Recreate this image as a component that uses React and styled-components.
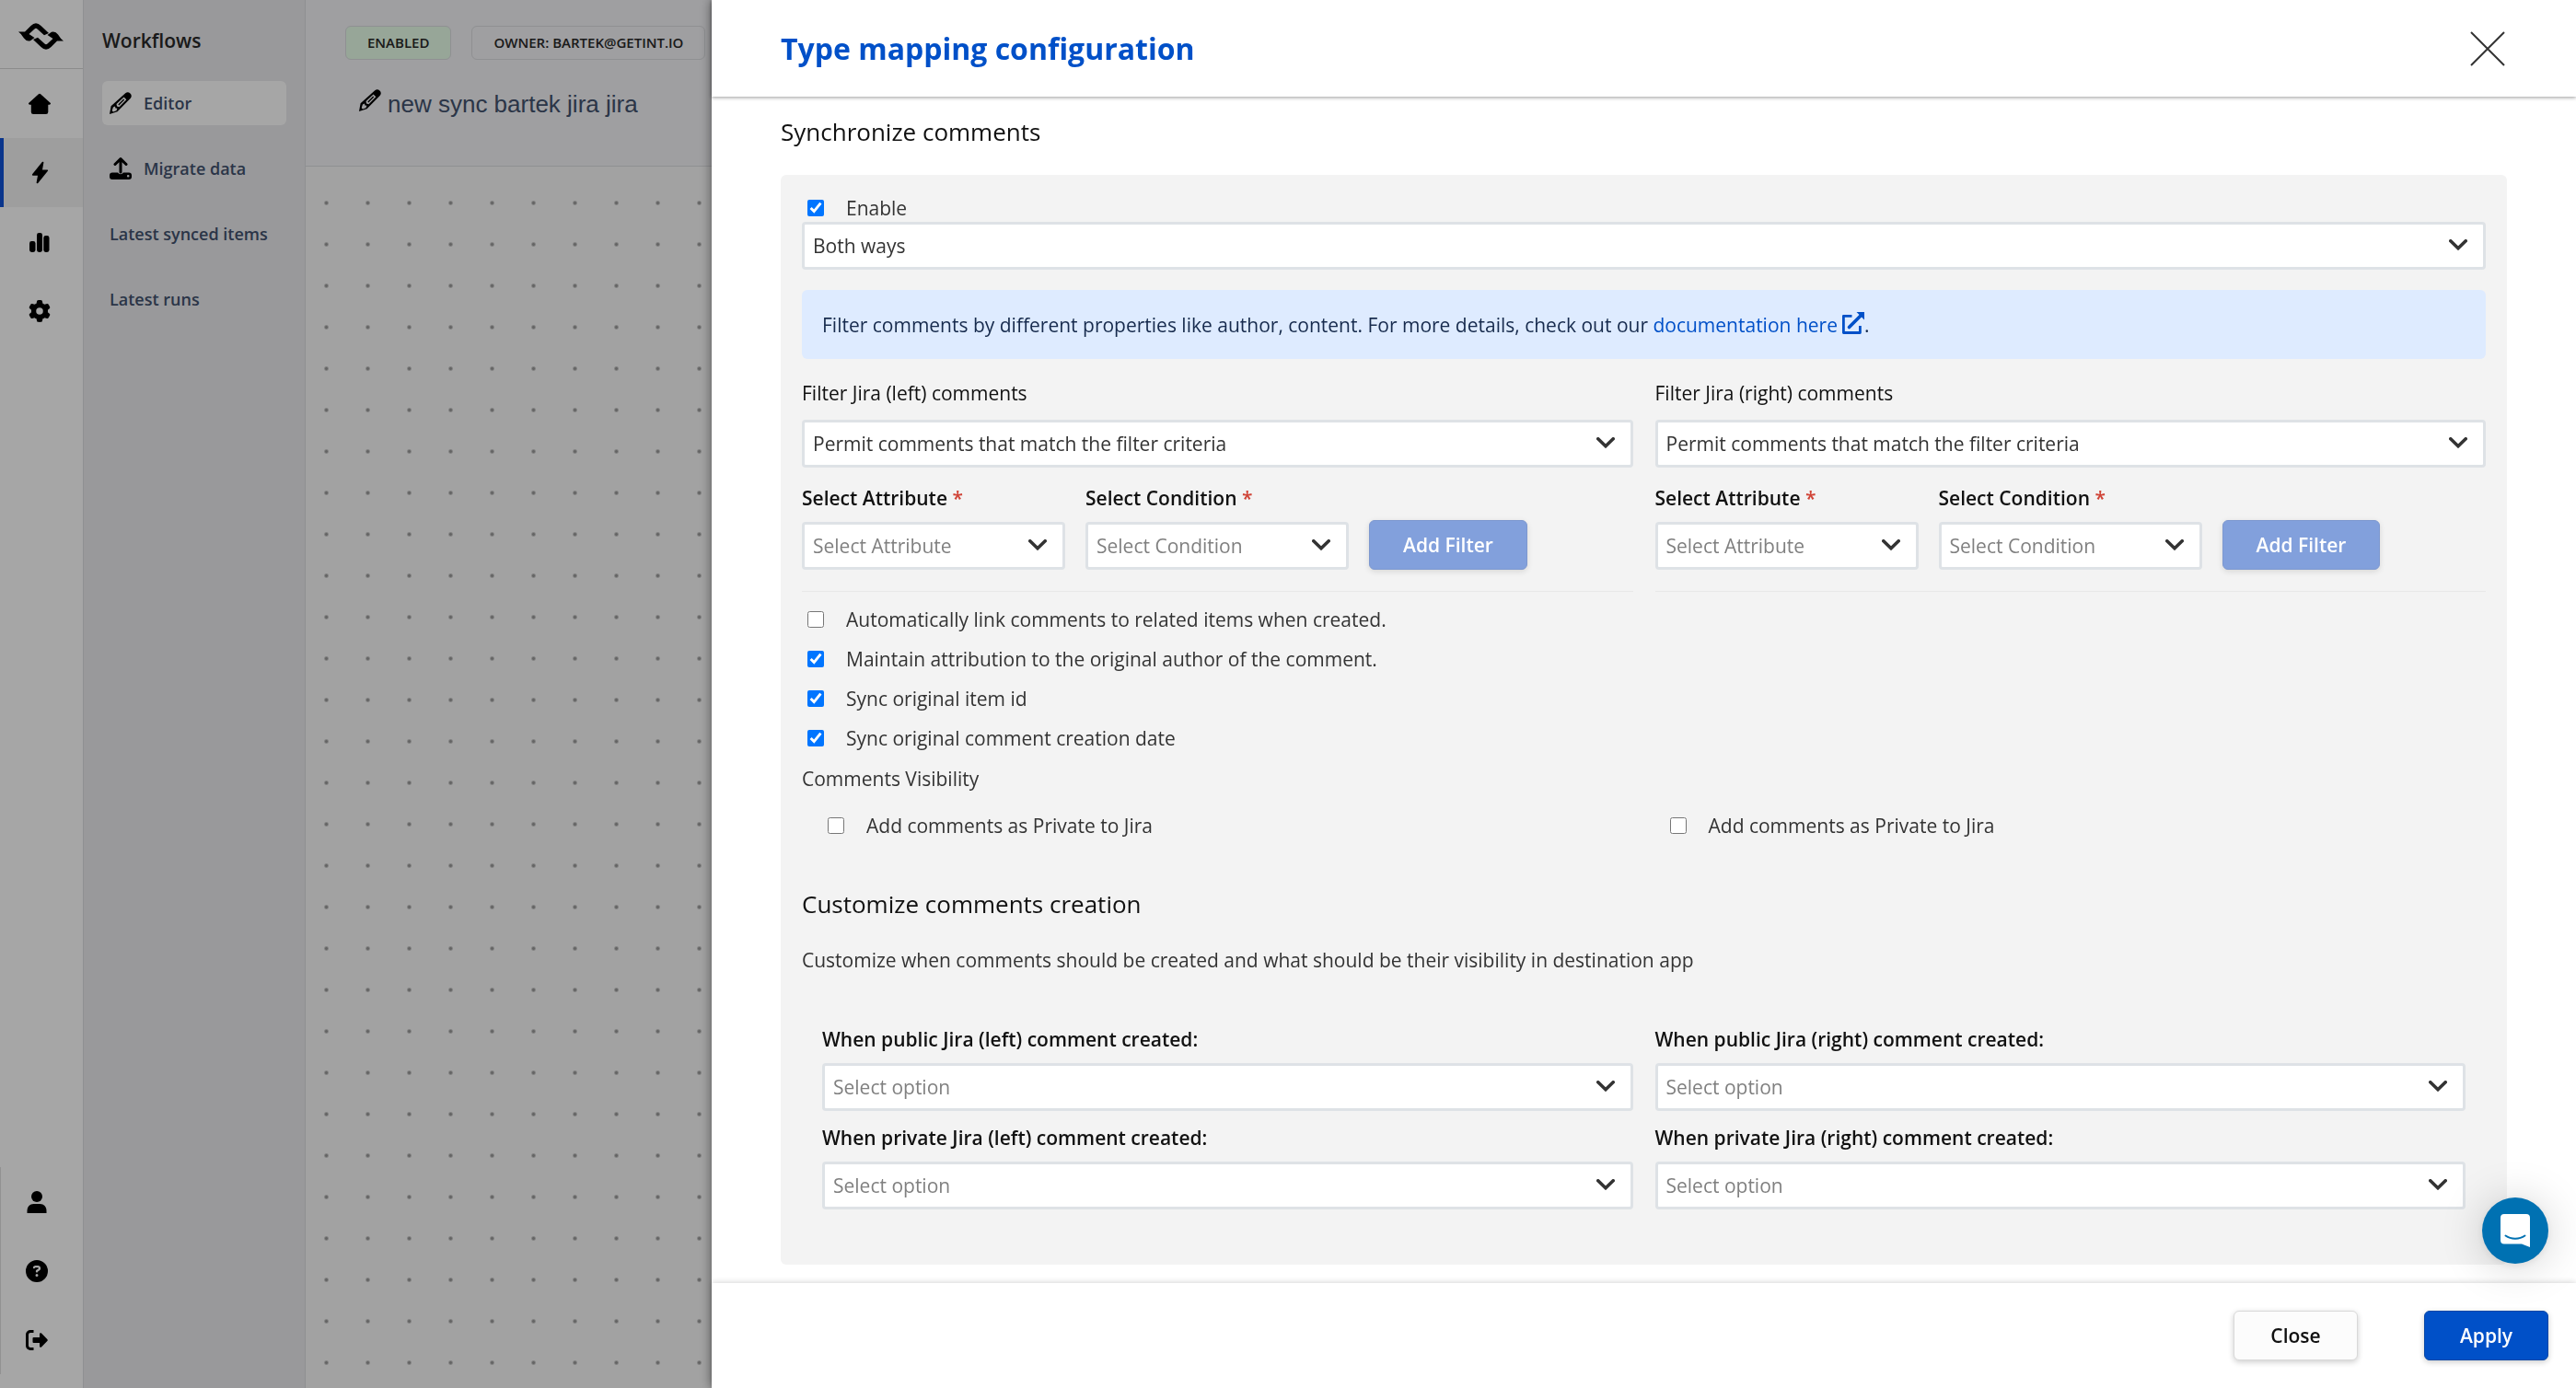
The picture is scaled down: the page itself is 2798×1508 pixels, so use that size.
import React, { useId } from "react";
import styled, { createGlobalStyle, css } from "styled-components";
import { FaGear, FaCircleQuestion } from "react-icons/fa6";
import { IoFlash } from "react-icons/io5";

const GlobalStyle = createGlobalStyle`
  *, *::before, *::after { box-sizing: border-box; }
  body {
    margin: 0;
    font-family: "Open Sans", "Noto Sans", sans-serif;
    font-size: 21px;
    line-height: 30px;
    color: #333;
    overflow: hidden;
  }
  h1, h2, h3, p { margin: 0; }
  a { text-decoration: none; }
  button, select, input { font: inherit; }
`;

const Page = styled.div`
  display: flex;
  height: 100vh;
  background: #fff;
`;

/* ---------- icon rail ---------- */

const Rail = styled.nav`
  display: flex;
  flex-direction: column;
  flex: none;
  width: 91px;
  padding-bottom: 15px;
  border-right: 1px solid #dcdde0;
`;

const LogoLink = styled.a`
  display: flex;
  align-items: center;
  height: 75px;
  padding: 4px 0 0 20px;
  border-bottom: 1px solid #d8d8d8;
`;

const RailLink = styled.a`
  display: flex;
  align-items: center;
  height: 75px;
  padding-left: 27px;
  color: #000;
  border-left: 4px solid transparent;
  ${(p) =>
    p.$active &&
    css`
      background: #f3f3f3;
      border-left-color: #1052d8;
    `}
`;

const RailFooter = styled.div`
  margin-top: auto;
  border-left: 1px solid #e0e0e0;
  ${RailLink} {
    border-left: 0;
  }
`;

/* ---------- section menu ---------- */

const Menu = styled.nav`
  display: flex;
  flex-direction: column;
  gap: 23px;
  flex: none;
  width: 241px;
  padding: 29px 20px;
  background: #ebebee;
  border-right: 1px solid #dcdde0;
`;

const MenuTitle = styled.h2`
  font-size: 21px;
  font-weight: 600;
  line-height: 30px;
  margin-bottom: 6px;
  color: #282828;
`;

const MenuLink = styled.a`
  display: flex;
  align-items: center;
  gap: 13px;
  height: 48px;
  padding: 0 8px;
  border-radius: 6px;
  font-size: 18px;
  font-weight: 600;
  white-space: nowrap;
  color: #42526e;
  background: ${(p) => (p.$active ? "#fff" : "transparent")};
  svg {
    color: #000;
  }
`;

/* ---------- workflow canvas ---------- */

const Workspace = styled.main`
  display: flex;
  flex-direction: column;
  flex: 1;
  min-width: 0;
`;

const WorkspaceHeader = styled.header`
  display: flex;
  flex-direction: column;
  gap: 25px;
  height: 181px;
  padding: 28px 43px;
  background: #f4f4f7;
  border-bottom: 1px solid #dcdde0;
`;

const Badges = styled.div`
  display: flex;
  gap: 22px;
`;

const Badge = styled.span`
  padding: 0 23px;
  border: 1px solid #dcdde0;
  border-radius: 6px;
  font-size: 15px;
  font-weight: 600;
  line-height: 35px;
  color: #282828;
  background: ${(p) => (p.$tone === "success" ? "#e8ffea" : "transparent")};
`;

const WorkflowName = styled.h1`
  display: flex;
  align-items: center;
  gap: 7px;
  padding-left: 15px;
  font-family: "Liberation Sans", Arial, sans-serif;
  font-size: 26px;
  font-weight: 400;
  line-height: 46px;
  color: #42526e;
  svg {
    margin-bottom: 8px;
    color: #000;
  }
`;

const Canvas = styled.div`
  flex: 1;
  background-color: #f9f9f9;
  background-image: radial-gradient(circle, #9c9c9c 1px, transparent 3px);
  background-size: 45px 45px;
  background-position: 0 17px;
`;

const Backdrop = styled.div`
  position: fixed;
  inset: 0;
  background: rgba(0, 0, 0, 0.35);
`;

/* ---------- drawer ---------- */

const Drawer = styled.aside`
  position: fixed;
  top: 0;
  right: 0;
  bottom: 0;
  left: 773px;
  display: flex;
  flex-direction: column;
  background: #fff;
  box-shadow: 0 0 12px rgba(0, 0, 0, 0.5);
`;

const DrawerHeader = styled.header`
  z-index: 1;
  display: flex;
  align-items: center;
  justify-content: space-between;
  flex: none;
  height: 105px;
  padding: 0 77px 0 75px;
  background: #fff;
  box-shadow: 0 1px 4px rgba(0, 0, 0, 0.4);
`;

const DrawerTitle = styled.h1`
  font-size: 32px;
  font-weight: 700;
  line-height: 44px;
  color: #0050c8;
`;

const IconButton = styled.button`
  display: flex;
  padding: 0;
  border: 0;
  background: none;
  color: #333;
  cursor: pointer;
`;

const DrawerBody = styled.div`
  flex: 1;
  min-height: 0;
  overflow-y: auto;
  padding: 20px 75px;
`;

const SectionTitle = styled.h2`
  font-size: 26px;
  font-weight: 400;
  line-height: 36px;
  color: #111;
`;

const Panel = styled.section`
  margin-top: 29px;
  padding: 21px 23px 60px;
  border-radius: 6px;
  background: #f3f3f3;
`;

const CheckLabel = styled.label`
  display: flex;
  align-items: center;
  gap: 24px;
  height: ${(p) => (p.$compact ? "30px" : "43px")};
  padding-left: 6px;
  cursor: pointer;
`;

const CheckInput = styled.input`
  flex: none;
  width: 18px;
  height: 18px;
  margin: 0;
`;

const CheckList = styled.div`
  margin: 8px 0;
`;

const SelectBox = styled.div`
  display: grid;
  align-items: center;
  > * {
    grid-area: 1 / 1;
  }
  > svg {
    justify-self: end;
    margin-right: 20px;
    margin-bottom: 3px;
    color: #333;
    pointer-events: none;
  }
`;

const SelectInput = styled.select`
  appearance: none;
  width: 100%;
  height: 52px;
  padding: 0 48px 0 9px;
  border: 3px solid #dee2e6;
  border-radius: 4px;
  background: #fff;
  color: ${(p) => (p.$placeholder ? "#808080" : "#333")};
`;

const Info = styled.p`
  margin: 22px 0;
  padding: 23px 22px 21px;
  border-radius: 6px;
  line-height: 31px;
  color: #172b4d;
  background: #deebff;
`;

const InfoLink = styled.a`
  color: #0050c8;
  svg {
    margin-left: 5px;
    vertical-align: -2px;
  }
`;

const Columns = styled.div`
  display: grid;
  grid-template-columns: 1fr 1fr;
  gap: 14px 24px;
  ${(p) => p.$inset && "padding: 0 22px;"}
`;

const PrivateColumns = styled.div`
  display: grid;
  grid-template-columns: 1fr 1fr;
  margin-top: 14px;
  > * {
    margin-left: 22px;
  }
`;

const Field = styled.div`
  display: flex;
  flex-direction: column;
  gap: ${(p) => (p.$loose ? "14px" : "11px")};
`;

const FieldLabel = styled.label`
  font-weight: ${(p) => (p.$strong ? 600 : 400)};
  color: #111;
`;

const Required = styled.span`
  color: #d04437;
`;

const FilterColumn = styled.div`
  padding-bottom: 23px;
  border-bottom: 1px solid #e8e8e8;
`;

const FilterRow = styled.div`
  display: grid;
  grid-template-columns: minmax(0, 286px) minmax(0, 286px) auto;
  justify-content: start;
  align-items: end;
  gap: 22px;
  margin-top: 18px;
`;

const Button = styled.button`
  min-width: 135px;
  height: 54px;
  padding: 0 36px;
  border: 1px solid ${(p) => (p.$primary ? "#0747a6" : "#d9d9d9")};
  border-radius: 6px;
  font-weight: 600;
  color: ${(p) => (p.$primary ? "#fff" : "#111")};
  background: ${(p) => (p.$primary ? "#0050c8" : "#fcfcfc")};
  box-shadow: 0 2px 6px rgba(0, 0, 0, 0.2);
  cursor: pointer;
  &:disabled {
    border-color: #7d98cf;
    background: #82a0dc;
    box-shadow: 0 2px 6px rgba(0, 0, 0, 0.12);
    cursor: default;
  }
`;

const Customize = styled.div`
  display: flex;
  flex-direction: column;
  gap: 28px;
  margin: 46px 0 56px;
`;

const DrawerFooter = styled.footer`
  z-index: 1;
  display: flex;
  align-items: center;
  justify-content: flex-end;
  gap: 72px;
  flex: none;
  height: 114px;
  padding: 0 30px;
  background: #fff;
  box-shadow: 0 -1px 6px rgba(0, 0, 0, 0.16);
`;

const ChatLauncher = styled.button`
  position: fixed;
  right: 30px;
  bottom: 135px;
  z-index: 2;
  display: flex;
  align-items: center;
  justify-content: center;
  width: 72px;
  height: 72px;
  padding: 0;
  border: 0;
  border-radius: 50%;
  background: #0071b2;
  box-shadow: 0 2px 9px rgba(0, 0, 0, 0.08), 0 3px 48px rgba(0, 0, 0, 0.18);
  cursor: pointer;
`;

/* ---------- icons ---------- */

const logoHalf =
  "M0 9.500H7L13.500 3Q19-2.500 24.500 3L33 11 28 13.200 20.500 6.500Q19 5 17.500 6.500L11.500 12 17.500 16 13 19.200Q9 20.500 6 16.500 3 11.500 0 9.500Z";

const Logo = () => (
  <svg width="49" height="29" viewBox="0 0 49 29" aria-hidden="true">
    <path d={logoHalf} />
    <path d={logoHalf} transform="rotate(180 24.5 14.5)" />
  </svg>
);

const HomeIcon = () => (
  <svg width="24" height="24" viewBox="0 0 24 24" fill="currentColor" aria-hidden="true">
    <path d="M10.900 1.300a1.600 1.600 0 0 1 2.200 0L23.600 10.700c.8.800.4 2-.7 2H21.300v8a2.400 2.400 0 0 1-2.400 2.400H5.200a2.400 2.400 0 0 1-2.400-2.400v-8H1.100c-1.100 0-1.500-1.200-.7-2z" />
  </svg>
);

const BarsIcon = () => (
  <svg width="24" height="24" viewBox="0 0 24 24" fill="currentColor" aria-hidden="true">
    <rect x="1" y="11" width="6.500" height="12" rx="2.400" />
    <rect x="9" y="2" width="6" height="21" rx="2.400" />
    <rect x="16.300" y="5" width="6.200" height="18" rx="2.400" />
  </svg>
);

const PersonIcon = () => (
  <svg width="24" height="24" viewBox="0 0 24 24" fill="currentColor" aria-hidden="true">
    <circle cx="12" cy="6" r="6" />
    <path d="M1.500 24v-2.500C1.500 17 4.500 14 8.500 14h7c4 0 7 3 7 7.500V24z" />
  </svg>
);

const SignOutIcon = () => (
  <svg width="24" height="24" viewBox="0 0 24 24" aria-hidden="true">
    <path d="M8.500 2.500H5A3.500 3.500 0 0 0 1.500 6v12A3.500 3.500 0 0 0 5 21.500h3.500" fill="none" stroke="currentColor" strokeWidth="3" />
    <path fill="currentColor" d="M8.500 9H15V5.500c0-1.200 1.200-1.700 2-.9l6.300 6.300c.6.600.6 1.600 0 2.200L17 19.400c-.8.800-2 .3-2-.9V15H8.500A1 1 0 0 1 7.500 14v-4a1 1 0 0 1 1-1z" />
  </svg>
);

const PencilIcon = () => (
  <svg width="24" height="24" viewBox="0 0 24 24" aria-hidden="true">
    <path fill="currentColor" fillRule="evenodd" d="M17.200 1.200a4 4 0 0 1 5.600 5.600L8.500 21.200 0 24l1.600-8.800zM3.900 16.500 2.700 20.200l1.300 1.200 3.400-1.100 1-2.600-2-.3-.4-2zM7.500 13l.5 2.500 2.500.7 7.800-8-2.700-2.800z" />
    <path d="M9.800 14 15.700 8" stroke="currentColor" strokeWidth="1.400" />
  </svg>
);

const UploadIcon = () => (
  <svg width="24" height="24" viewBox="0 0 24 24" aria-hidden="true">
    <path fill="none" stroke="currentColor" strokeWidth="3" strokeLinecap="round" strokeLinejoin="round" d="M12 16V2M6 7.500 12 1.700l6 5.800" />
    <path fill="currentColor" fillRule="evenodd" d="M3 16.500h6a3.500 3.500 0 0 0 6 0h6a3 3 0 0 1 3 3V21a3 3 0 0 1-3 3H3a3 3 0 0 1-3-3v-1.500a3 3 0 0 1 3-3zm17.200 2.400a1.300 1.300 0 1 0 0 2.600 1.300 1.300 0 0 0 0-2.600z" />
  </svg>
);

const ChevronIcon = () => (
  <svg width="20" height="12" viewBox="0 0 20 12" aria-hidden="true">
    <path d="M1.800 1.800 10 9.700l8.200-7.900" fill="none" stroke="currentColor" strokeWidth="3.600" strokeLinecap="round" />
  </svg>
);

const CloseIcon = () => (
  <svg width="38" height="38" viewBox="0 0 38 38" aria-hidden="true">
    <path d="M1 1l36 36M37 1L1 37" stroke="currentColor" strokeWidth="2" />
  </svg>
);

const ExternalIcon = () => (
  <svg width="24" height="24" viewBox="0 0 24 24" aria-hidden="true">
    <path d="M10.500 4.300H1.400v18.200h18V15" fill="none" stroke="currentColor" strokeWidth="2.800" strokeLinejoin="round" />
    <path d="M7.500 16.500 19.500 4.500" stroke="currentColor" strokeWidth="3.600" strokeLinecap="round" />
    <path d="M15.500 0H24v8.500z" fill="currentColor" />
  </svg>
);

const ChatIcon = () => (
  <svg width="32" height="36" viewBox="0 0 32 36" aria-hidden="true">
    <path fill="#fff" d="M4 0h24a4 4 0 0 1 4 4v32l-9-3.500H4a4 4 0 0 1-4-4V4a4 4 0 0 1 4-4z" />
    <path d="M5.500 23.500c6 4.300 15 4.300 21 0" fill="none" stroke="#0071b2" strokeWidth="2" strokeLinecap="round" />
  </svg>
);

/* ---------- form parts ---------- */

function Select({ id, label, options, placeholder }) {
  return (
    <SelectBox>
      <SelectInput id={id} aria-label={label} $placeholder={placeholder} defaultValue={options[0]}>
        {options.map((o) => (
          <option key={o}>{o}</option>
        ))}
      </SelectInput>
      <ChevronIcon />
    </SelectBox>
  );
}

function SelectField({ label, required, strong, loose, ...rest }) {
  const id = useId();
  return (
    <Field $loose={loose}>
      <FieldLabel htmlFor={id} $strong={strong}>
        {label}
        {required && <Required> *</Required>}
      </FieldLabel>
      <Select id={id} {...rest} />
    </Field>
  );
}

function Check({ label, checked, compact }) {
  return (
    <CheckLabel $compact={compact}>
      <CheckInput type="checkbox" defaultChecked={checked} />
      {label}
    </CheckLabel>
  );
}

function CommentFilter({ side }) {
  return (
    <FilterColumn>
      <SelectField loose label={`Filter Jira (${side}) comments`} options={["Permit comments that match the filter criteria"]} />
      <FilterRow>
        <SelectField strong required placeholder label="Select Attribute" options={["Select Attribute"]} />
        <SelectField strong required placeholder label="Select Condition" options={["Select Condition"]} />
        <Button type="button" $primary disabled>
          Add Filter
        </Button>
      </FilterRow>
    </FilterColumn>
  );
}

const creationFields = [
  "When public Jira (left) comment created:",
  "When public Jira (right) comment created:",
  "When private Jira (left) comment created:",
  "When private Jira (right) comment created:",
];

export default function App() {
  return (
    <>
      <GlobalStyle />
      <Page>
        <Rail aria-label="Main">
          <LogoLink href="#" aria-label="Start"><Logo /></LogoLink>
          <RailLink href="#home" aria-label="Home"><HomeIcon /></RailLink>
          <RailLink href="#workflows" aria-label="Workflows" $active><IoFlash size={25} /></RailLink>
          <RailLink href="#reports" aria-label="Reports"><BarsIcon /></RailLink>
          <RailLink href="#settings" aria-label="Settings"><FaGear size={24} /></RailLink>
          <RailFooter>
            <RailLink href="#profile" aria-label="Profile"><PersonIcon /></RailLink>
            <RailLink href="#help" aria-label="Help"><FaCircleQuestion size={24} /></RailLink>
            <RailLink href="#logout" aria-label="Log out"><SignOutIcon /></RailLink>
          </RailFooter>
        </Rail>
        <Menu aria-label="Workflows">
          <MenuTitle>Workflows</MenuTitle>
          <MenuLink href="#editor" $active><PencilIcon />Editor</MenuLink>
          <MenuLink href="#migrate"><UploadIcon />Migrate data</MenuLink>
          <MenuLink href="#items">Latest synced items</MenuLink>
          <MenuLink href="#runs">Latest runs</MenuLink>
        </Menu>
        <Workspace>
          <WorkspaceHeader>
            <Badges>
              <Badge $tone="success">ENABLED</Badge>
              <Badge>OWNER: BARTEK@GETINT.IO</Badge>
            </Badges>
            <WorkflowName><PencilIcon />new sync bartek jira jira</WorkflowName>
          </WorkspaceHeader>
          <Canvas />
        </Workspace>
      </Page>
      <Backdrop />
      <Drawer role="dialog" aria-labelledby="drawer-title">
        <DrawerHeader>
          <DrawerTitle id="drawer-title">Type mapping configuration</DrawerTitle>
          <IconButton type="button" aria-label="Close panel"><CloseIcon /></IconButton>
        </DrawerHeader>
        <DrawerBody>
          <SectionTitle>Synchronize comments</SectionTitle>
          <Panel>
            <Check compact checked label="Enable" />
            <Select label="Sync direction" options={["Both ways"]} />
            <Info>
              Filter comments by different properties like author, content. For more details, check out our{" "}
              <InfoLink href="#docs">documentation here<ExternalIcon /></InfoLink>.
            </Info>
            <Columns>
              <CommentFilter side="left" />
              <CommentFilter side="right" />
            </Columns>
            <CheckList>
              <Check label="Automatically link comments to related items when created." />
              <Check checked label="Maintain attribution to the original author of the comment." />
              <Check checked label="Sync original item id" />
              <Check checked label="Sync original comment creation date" />
            </CheckList>
            <p>Comments Visibility</p>
            <PrivateColumns>
              <Check label="Add comments as Private to Jira" />
              <Check label="Add comments as Private to Jira" />
            </PrivateColumns>
            <Customize>
              <SectionTitle as="h3">Customize comments creation</SectionTitle>
              <p>Customize when comments should be created and what should be their visibility in destination app</p>
            </Customize>
            <Columns $inset>
              {creationFields.map((label) => (
                <SelectField key={label} strong placeholder label={label} options={["Select option"]} />
              ))}
            </Columns>
          </Panel>
        </DrawerBody>
        <DrawerFooter>
          <Button type="button">Close</Button>
          <Button type="button" $primary>Apply</Button>
        </DrawerFooter>
      </Drawer>
      <ChatLauncher type="button" aria-label="Open chat"><ChatIcon /></ChatLauncher>
    </>
  );
}
